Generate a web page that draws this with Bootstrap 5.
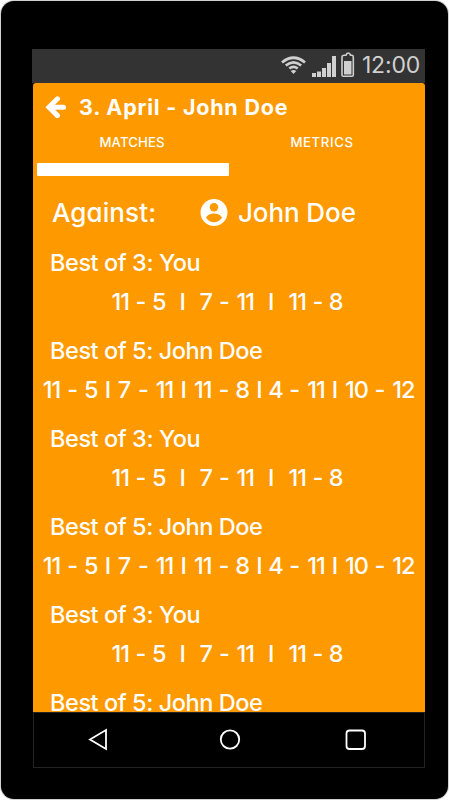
<!DOCTYPE html>
<html lang="en">
<head>
<meta charset="utf-8">
<meta name="viewport" content="width=device-width, initial-scale=1">
<title>3. April - John Doe</title>
<link rel="stylesheet" href="https://cdn.jsdelivr.net/npm/bootstrap@5.3.0/dist/css/bootstrap.min.css">
<style>
body{width:449px;height:800px;background:#fff;font-family:"Inter","Open Sans",sans-serif;font-feature-settings:"cv11","ss03";color:#fff;font-size:23px;font-weight:500;white-space:nowrap}
.phone{width:447px;height:798px;margin:1px;border-radius:13px;background:#000;padding:48px 23px 0 31px;box-shadow:0 0 0 1px #8a8a8a66}
.statusbar{height:34px;background:#333;color:#d0d0d0;padding-right:5px}
.clock{font-size:23px;letter-spacing:-.2px;line-height:32px;margin-left:7px;font-weight:400}
.screen{height:629px;margin-left:1px;background:#f90;border-radius:3px 3px 0 0}
.titlebar{height:48px;padding-left:12px}
.titlebar h1{font-size:21.5px;font-weight:700;line-height:48px;margin-left:13px;letter-spacing:.77px}
.tabs a{height:32px;width:190px;font-size:13.2px;line-height:23px;letter-spacing:.1px}
.tabs a + a{letter-spacing:.6px}
.marker{width:192px;height:13px;margin-left:4px;border-radius:1px}
.rival{height:73px;font-size:26px;padding-left:19px}
.rival svg{flex:none}
.label{letter-spacing:.1px;width:148px}
.name{margin-left:10px;letter-spacing:-.1px}
.matches{margin-top:-6px}
.series{height:88px}
.series h2{font-size:23.5px;font-weight:500;height:40px;line-height:40px;padding-left:17px;letter-spacing:-.43px}
.scores{height:38px;line-height:38px;font-size:23.5px}
.scores span{display:flex;justify-content:center}
.game{display:flex;gap:8.5px}
.wide{gap:16px;padding-right:4px}
.tight{gap:9.1px;padding-right:1px}
.tight .game{gap:9px}
.one{width:12.5px}.eleven{width:17.5px;letter-spacing:-1px}.ten{width:22px;letter-spacing:-1px}
.dash{width:7px}.bar{width:2.5px}
.navkeys{height:56px;margin-left:1px;border:1px solid #242424}
</style>
<script src="https://cdn.jsdelivr.net/npm/bootstrap@5.3.0/dist/js/bootstrap.bundle.min.js"></script>
</head>
<body class="overflow-hidden">
<div class="phone">
  <div class="statusbar d-flex justify-content-end">
    <svg width="74" height="34" viewBox="0 0 74 34" fill="none" stroke="#d0d0d0">
      <path d="M1 13.5Q12.5 4 24 13.5M4.8 16.5Q12.5 10.2 20.2 16.5M8.3 19.5Q12.5 16.2 16.7 19.5" stroke-width="2.7"/>
      <path d="M9.7 22Q12.5 20 15.3 22L12.5 25Z" fill="#d0d0d0" stroke="none"/>
      <path d="M31 24h4v4h-4zM36 22.5h4V28h-4zM41 19h4v9h-4zM46 14h4v14h-4zM51 7h4v21h-4z" fill="#d0d0d0" stroke="none"/>
      <path d="M63 6.200h2Q65.500 4 67.200 4Q69 4 69.500 6.200H71Q72.300 6.500 72.300 8V26Q72.300 27.300 71 27.300H62.300Q61 27.300 61 26V8Q61 6.500 63 6.200Z" stroke-width="1.6"/>
      <path d="M63 12h7.500v13.500H63z" fill="#d0d0d0" stroke="none"/>
    </svg>
    <span class="clock">12:00</span>
  </div>
  <main class="screen overflow-hidden">
    <header class="titlebar d-flex align-items-center">
      <svg width="21" height="22" viewBox="0 0 21 22" fill="none" stroke="#fff" stroke-width="5"><path d="M12.500 2.800L4 11.200L12.500 19.600M5 11.200H18.500" stroke-linecap="round"/></svg>
      <h1 class="mb-0">3. April - John Doe</h1>
    </header>
    <nav class="tabs d-flex text-center">
      <a class="text-white text-decoration-none ms-1">MATCHES</a>
      <a class="text-white text-decoration-none">METRICS</a>
    </nav>
    <div class="marker bg-white"></div>
    <div class="rival d-flex align-items-center">
      <span class="label">Against:</span>
      <svg width="28" height="28" viewBox="0 0 28 28"><circle cx="14" cy="13.500" r="13.500" fill="#fff"/><circle cx="14" cy="8.300" r="4.200" fill="#f90"/><path d="M6 18.500Q8.500 14.500 14 14.500T22 18.500Q19 23.200 14 23.200T6 18.500Z" fill="#f90"/></svg>
      <span class="name">John Doe</span>
    </div>
    <div id="list" class="matches"></div>
  </main>
  <footer class="navkeys">
    <svg class="d-block" width="390" height="54" viewBox="0 0 390 54" fill="none" stroke="#fff" stroke-width="1.800"><path d="M56 26.500L72 17V36Z"/><circle cx="196" cy="26.500" r="9.200"/><rect x="312.500" y="17.500" width="18.500" height="18.500" rx="3"/></svg>
  </footer>
</div>
<script>
const three = [[11,5],[7,11],[11,8]], five = [[11,5],[7,11],[11,8],[4,11],[10,12]];
const cell = n => `<span class="${n < 10 ? 'one' : n === 11 ? 'eleven' : 'ten'}">${n}</span>`;
const scores = (games, cls) => `<div class="scores d-flex justify-content-center ${cls}">` +
  games.map(g => `<div class="game">${cell(g[0])}<span class="dash">-</span>${cell(g[1])}</div>`).join('<span class="bar">I</span>') + '</div>';
const short = ['Best of 3: You', scores(three, 'wide')], long = ['Best of 5: John Doe', scores(five, 'tight')];
const series = [short, long, short, long, short, ['Best of 5: John Doe', '']];
document.getElementById('list').innerHTML = series.map(([title, body]) => `<section class="series"><h2 class="mb-0">${title}</h2>${body}</section>`).join('');
</script>
</body>
</html>
